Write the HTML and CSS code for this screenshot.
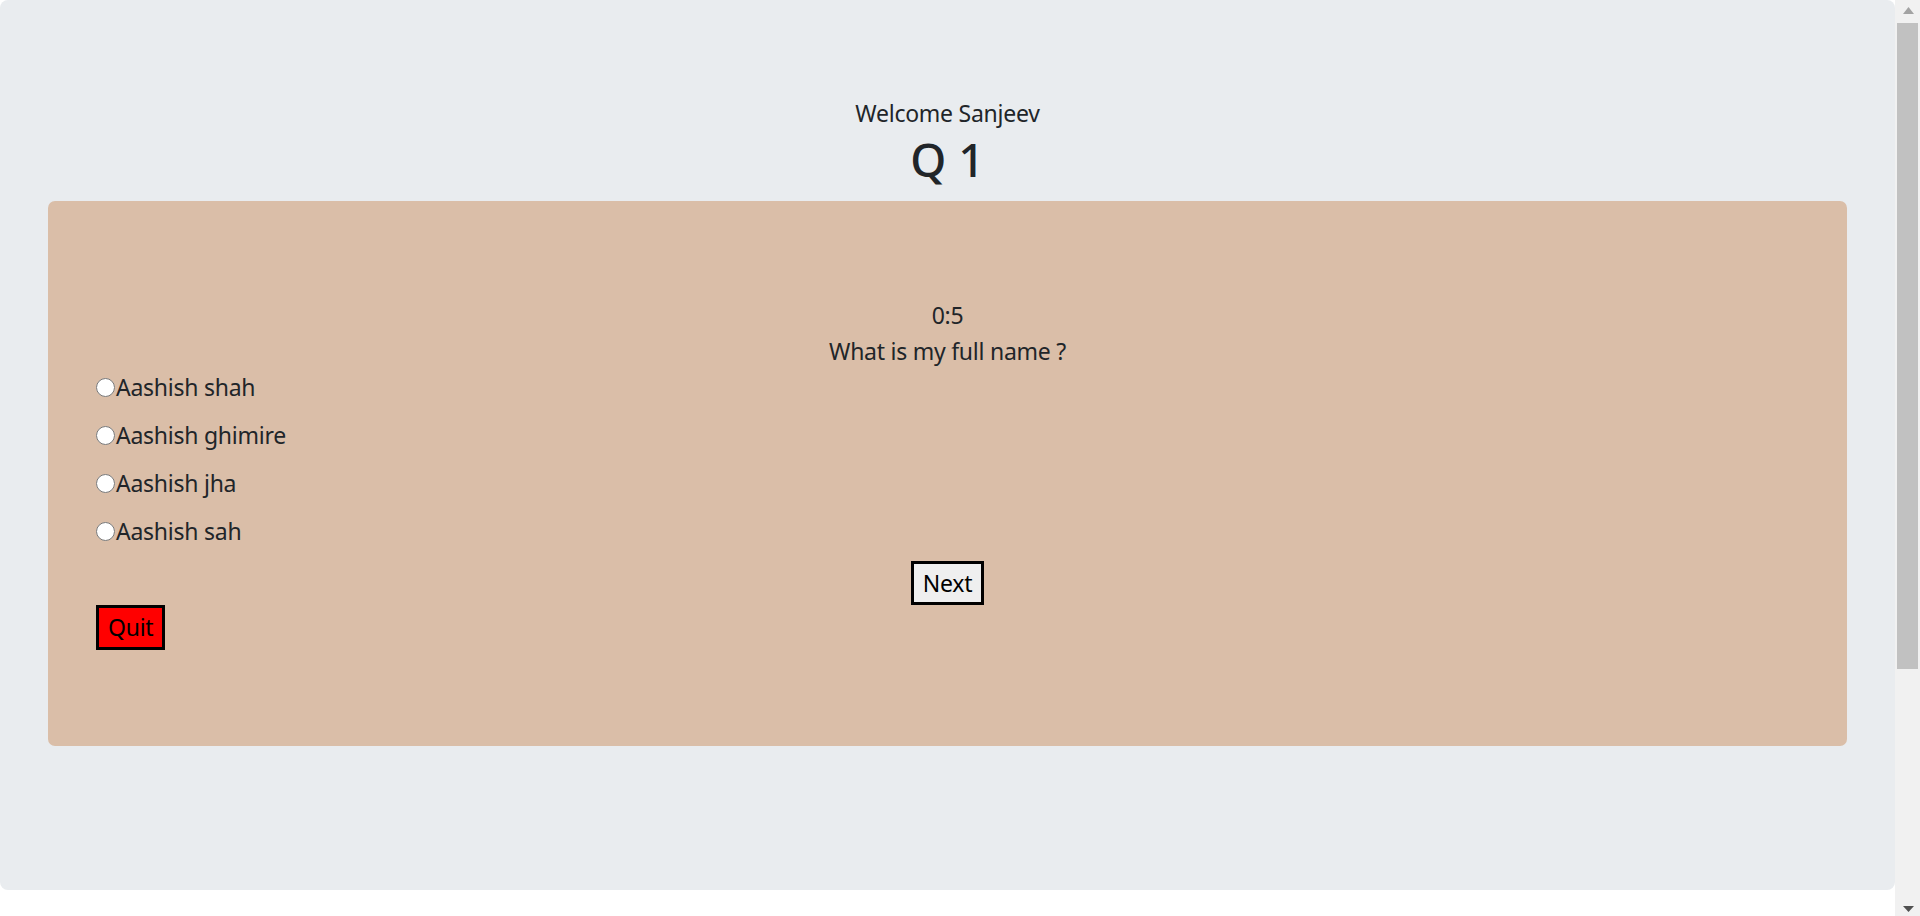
FILE: index.html
```html
<!DOCTYPE html>
<html lang="en">
<head>
<meta charset="utf-8">
<title>Quiz</title>
<link rel="stylesheet" href="styles.css">
</head>
<body>
<div class="viewport">
  <main class="page">
    <div class="welcome">Welcome Sanjeev</div>
    <h2 class="qnum">Q 1</h2>
    <section class="card">
      <div class="timer">0:5</div>
      <div class="question">What is my full name ?</div>
      <div class="options">
        <label class="option"><input type="radio" name="ans" class="radio"><span>Aashish shah</span></label>
        <label class="option"><input type="radio" name="ans" class="radio"><span>Aashish ghimire</span></label>
        <label class="option"><input type="radio" name="ans" class="radio"><span>Aashish jha</span></label>
        <label class="option"><input type="radio" name="ans" class="radio"><span>Aashish sah</span></label>
      </div>
      <div class="next-row"><button class="btn btn-next">Next</button></div>
      <div class="quit-row"><button class="btn btn-quit">Quit</button></div>
    </section>
  </main>
</div>
<div class="scrollbar" aria-hidden="true">
  <div class="sb-btn sb-up"><svg width="11" height="7" viewBox="0 0 11 7"><path d="M5.5 0 L11 7 L0 7 Z" fill="#a3a3a3"/></svg></div>
  <div class="sb-thumb"></div>
  <div class="sb-fill"></div>
  <div class="sb-btn sb-down"><svg width="11" height="6" viewBox="0 0 11 6"><path d="M0 0 L11 0 L5.5 6 Z" fill="#505050"/></svg></div>
</div>
</body>
</html>
```
FILE: styles.css
```css
html {
  background: #ffffff;
}
body {
  margin: 0;
  height: 916px;
  overflow: hidden;
  display: flex;
  font-family: "Noto Sans", "Open Sans", sans-serif;
  font-size: 23px;
  letter-spacing: -0.25px;
  line-height: 1.5;
  color: #212529;
}
.viewport {
  flex: 1;
  min-width: 0;
  display: flex;
  flex-direction: column;
}
.page {
  background: #e9ecef;
  border-radius: 8px;
  padding: 95px 48px 144px;
  display: flex;
  flex-direction: column;
}
.welcome {
  text-align: center;
  line-height: 36px;
}
.qnum {
  margin: 0 0 12px;
  text-align: center;
  font-size: 46px;
  font-weight: 500;
  letter-spacing: 0;
  line-height: 57.6px;
}
.card {
  background: #dabea8;
  border-radius: 7px;
  padding: 96px 48px;
  display: flex;
  flex-direction: column;
}
.timer, .question {
  text-align: center;
  line-height: 36px;
}
.question {
  margin-bottom: 1px;
}
.options {
  display: flex;
  flex-direction: column;
  gap: 12px;
  margin-bottom: 11px;
}
.option {
  display: flex;
  align-items: center;
  height: 36px;
}
.radio {
  width: 19px;
  height: 19px;
  margin: 0 1px 0 0;
}
.next-row {
  display: flex;
  justify-content: center;
}
.quit-row {
  display: flex;
  justify-content: flex-start;
}
.btn {
  font-family: inherit;
  font-size: 23px;
  letter-spacing: -0.25px;
  line-height: 36px;
  color: #000;
  border: 3px solid #000;
  border-radius: 0;
  padding: 1px 9px;
  margin: 0;
}
.btn-next {
  background: #efefef;
  height: 44px;
}
.btn-quit {
  background: #ff0000;
  height: 45px;
  padding: 1px 9px 2px;
}
.scrollbar {
  width: 25px;
  flex: none;
  height: 916px;
  background: #f1f1f1;
  display: flex;
  flex-direction: column;
}
.sb-btn {
  display: flex;
  justify-content: center;
  flex: none;
}
.sb-up {
  height: 23px;
  padding-top: 7px;
  box-sizing: border-box;
  padding-left: 1px;
}
.sb-down {
  height: 17px;
  padding-top: 7px;
  box-sizing: border-box;
  padding-left: 1px;
}
.sb-btn svg {
  display: block;
}
.sb-thumb {
  height: 646px;
  margin: 0 2px 0 2px;
  background: #c1c1c1;
  flex: none;
}
.sb-fill {
  flex: 1;
}
```
